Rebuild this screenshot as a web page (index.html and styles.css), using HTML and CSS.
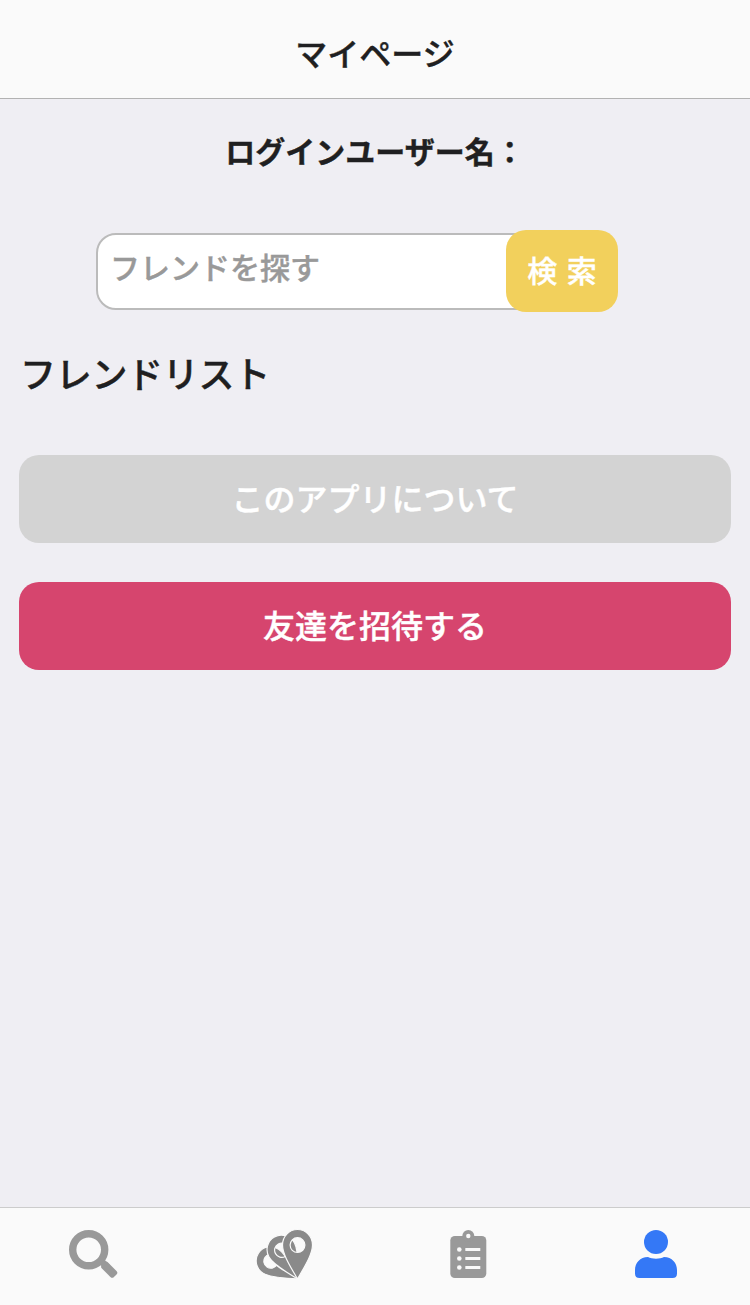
FILE: index.html
```html
<!DOCTYPE html>
<html lang="ja">
<head>
  <meta charset="UTF-8">
  <meta name="viewport" content="width=device-width, initial-scale=1.0">
  <title>マイページ</title>
  <link rel="stylesheet" href="styles.css">
</head>
<body>
  <!-- ツールバー -->
  <header class="toolbar">
    <h1 class="toolbar-title">マイページ</h1>
  </header>

  <main class="content">
    <p class="user-name">ログインユーザー名：</p>

    <!-- フレンド検索 -->
    <form class="search-form">
      <input type="text" class="search-input" placeholder="フレンドを探す">
      <button type="button" class="search-button">検 索</button>
    </form>

    <h2 class="list-title">フレンドリスト</h2>

    <button type="button" class="button button-about">このアプリについて</button>
    <button type="button" class="button button-invite">友達を招待する</button>
  </main>

  <!-- タブバー -->
  <nav class="tabbar">
    <a class="tab" aria-label="検索">
      <svg class="tab-icon" viewBox="0 0 60 60">
        <circle cx="24.700" cy="25.700" r="16" fill="none" stroke="currentColor" stroke-width="7.400"/>
        <rect x="35" y="41.300" width="8" height="6.500" fill="currentColor" transform="rotate(45 44.500 45)"/>
        <rect x="37" y="40.700" width="17" height="8.600" rx="2.500" fill="currentColor" transform="rotate(45 44.500 45)"/>
      </svg>
    </a>
    <a class="tab tab-map" aria-label="マップ">
      <!-- 同じピンを先端を軸に回転させて重ねる -->
      <svg class="tab-icon" viewBox="0 0 60 60">
        <defs>
          <path id="pin" fill-rule="evenodd" d="M0 -49C-8.500 -49 -15 -42 -15 -33.500C-15 -24 -6.500 -11 0 0.500C6.500 -11 15 -24 15 -33.500C15 -42 8.500 -49 0 -49ZM0 -40.800A7.400 7.400 0 1 1 0 -26A7.400 7.400 0 1 1 0 -40.800Z"/>
        </defs>
        <use class="pin" href="#pin" transform="translate(42.500 54.500) rotate(-57) scale(.95)"/>
        <use class="pin" href="#pin" transform="translate(42.500 54.500) rotate(-29) scale(.97)"/>
        <use class="pin" href="#pin" transform="translate(42.500 54.500)"/>
      </svg>
    </a>
    <a class="tab" aria-label="リスト">
      <svg class="tab-icon" viewBox="0 0 60 60">
        <rect x="11.300" y="12" width="36" height="42" rx="4.500" fill="currentColor"/>
        <circle cx="29.300" cy="12" r="6" fill="currentColor"/>
        <g fill="#fafafa">
          <circle cx="29.300" cy="12" r="2.200"/>
          <circle cx="20.300" cy="25.500" r="2.300"/>
          <circle cx="20.300" cy="34.500" r="2.300"/>
          <circle cx="20.300" cy="43.500" r="2.300"/>
          <rect x="26.300" y="24" width="15" height="3" rx=".5"/>
          <rect x="26.300" y="33" width="15" height="3" rx=".5"/>
          <rect x="26.300" y="42" width="15" height="3" rx=".5"/>
        </g>
      </svg>
    </a>
    <a class="tab tab-active" aria-label="マイページ">
      <svg class="tab-icon" viewBox="0 0 60 60" fill="currentColor">
        <circle cx="30" cy="18" r="12"/>
        <path d="M22 33C26 35.300 34 35.300 38 33C46 33 51 39 51 46V49.500C51 52.500 49.500 54 46.500 54H13.500C10.500 54 9 52.500 9 49.500V46C9 39 14 33 22 33Z"/>
      </svg>
    </a>
  </nav>
</body>
</html>
```

FILE: styles.css
```css
* {
  box-sizing: border-box;
}

body {
  margin: 0;
  height: 1305px;
  display: flex;
  flex-direction: column;
  background: #efeef3;
  color: #1f1f21;
  font-family: "Noto Sans CJK JP", sans-serif;
  -webkit-text-stroke: 0.4px;
}

/* ツールバー */
.toolbar {
  height: 99px;
  padding-top: 5px;
  display: flex;
  align-items: center;
  justify-content: center;
  background: #fafafa;
  border-bottom: 1px solid #b2b2b2;
}

.toolbar-title {
  margin: 0;
  font-size: 32px;
  font-weight: 500;
  line-height: 48px;
}

/* コンテンツ */
.content {
  flex: 1;
  display: flex;
  flex-direction: column;
  padding: 27px 19px 0;
}

.user-name {
  margin: 0;
  text-align: center;
  font-size: 30px;
  font-weight: bold;
  line-height: 48px;
}

/* 検索フォーム */
.search-form {
  display: flex;
  align-items: center;
  margin: 56px 0 0 77px;
}

.search-input {
  width: 440px;
  height: 77px;
  padding: 0 12px 10px;
  background: #fff;
  border: 2px solid #bbb;
  border-radius: 20px;
  font: 500 30px "Noto Sans CJK JP", sans-serif;
}

.search-input::placeholder {
  color: #999;
  opacity: 1;
}

.search-button {
  width: 112px;
  height: 82px;
  margin-left: -30px;
  padding: 0 0 5px;
  z-index: 1;
  background: #f2d05c;
  border: none;
  border-radius: 20px;
  color: #fff;
  font: 500 30px "Noto Sans CJK JP", sans-serif;
  word-spacing: 3px;
}

.list-title {
  margin: 33px 0 55px 1px;
  font-size: 36px;
  font-weight: 500;
  line-height: 55px;
  letter-spacing: -0.3px;
}

/* ボタン */
.button {
  height: 88px;
  margin-bottom: 39px;
  padding: 0 0 4px;
  border: none;
  border-radius: 20px;
  color: #fff;
  font: 500 32px "Noto Sans CJK JP", sans-serif;
}

.button-about {
  background: #d3d3d3;
}

.button-invite {
  background: #d6456e;
}

/* タブバー */
.tabbar {
  height: 98px;
  display: flex;
  background: #fafafa;
  border-top: 1px solid #ccc;
}

.tab {
  width: 25%;
  display: flex;
  justify-content: center;
  padding-top: 16px;
  color: #999;
}

.tab-active {
  color: #3478f6;
}

.tab-map {
  padding-left: 8px;
  color: #8a8a8a;
}

.tab-icon {
  width: 60px;
  height: 60px;
  overflow: visible;
}

.pin {
  fill: currentColor;
  stroke: #fafafa;
  stroke-width: 1.2;
}
```
